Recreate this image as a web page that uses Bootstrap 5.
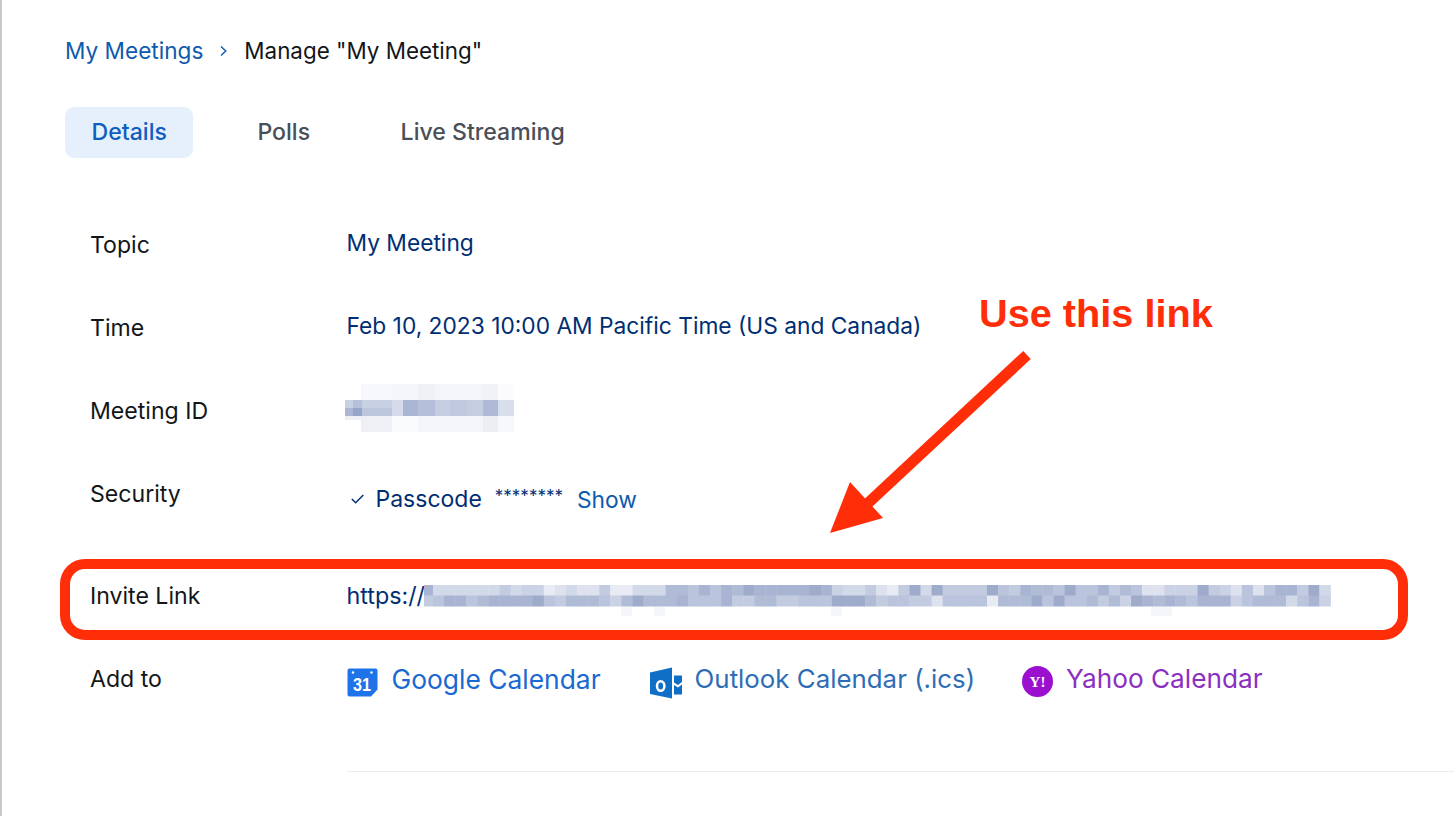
<!DOCTYPE html>
<html lang="en">
<head>
  <meta charset="UTF-8" />
  <meta name="viewport" content="width=device-width, initial-scale=1" />
  <title>Manage "My Meeting"</title>
  <link href="https://cdn.jsdelivr.net/npm/bootstrap@5.3.0/dist/css/bootstrap.min.css" rel="stylesheet" />
  <style>
    html, body { height: 100%; overflow: hidden; }
    body { font-family: Inter, "Liberation Sans", sans-serif; color: #131619; background: #fff; font-size: 22.75px; line-height: 32px; }
    .page-wrap { position: relative; height: 816px; border-left: 2px solid #c9c9c9; padding: 35px 0 0 63px; }
    .crumb-row { font-size: 22.4px; }
    .crumb-link { color: #0e5aad; text-decoration: none; font-size: 22.6px; }
    .crumb-sep { width: 9px; height: 12px; margin: 0 16px 0 16px; }
    .tab-row { margin-top: 40px; gap: 37.5px; height: 51px; }
    .tab-item { padding: 0 26.5px; line-height: 51px; border-radius: 9px; color: #4a4f57; font-size: 23.1px; font-weight: 500; text-decoration: none; }
    .tab-item.is-on { background: #e6f0fc; color: #0e5ec0; }
    .info-list { margin: 71px 0 0 25px; }
    .info-row { height: 83px; }
    .info-row.is-tall { height: 102px; }
    .info-label { width: 256.5px; flex: none; font-size: 23.1px; }
    .info-val { color: #002e73; margin-top: -2px; }
    .info-val.is-low { margin-top: 5px; }
    .info-val.is-level { margin-top: 0; }
    .check-ico { width: 13px; height: 10px; margin: 0 12px 0 4px; }
    .pass-text { font-size: 23px; }
    .stars { margin: 0 14px 0 13px; font-size: 17px; position: relative; top: -3px; }
    .show-link { color: #0e5aad; text-decoration: none; position: relative; top: 1px; }
    .meeting-blur { display: block; margin: -9px 0 0 -3px; }
    .invite-text { font-size: 23.3px; }
    .invite-blur { display: block; margin-left: -1px; }
    .cal-google-ico { margin-top: 5px; }
    .cal-outlook-ico { margin-top: 4px; }
    .cal-yahoo-ico { margin-top: 3px; }
    .cal-ico { flex: none; }
    .cal-link { font-size: 26.2px; text-decoration: none; }
    .cal-google { color: #1a68d1; margin: 0 49px 0 14px; font-size: 26.4px; }
    .cal-outlook { color: #2e6db4; margin: 0 47px 0 13px; font-size: 25.85px; }
    .cal-yahoo { color: #8a2fc0; margin-left: 13px; }
    .end-rule { height: 1px; background: #ededed; margin: 25px 0 0 256.5px; }
    .mark-box { position: absolute; left: 58px; top: 559px; width: 1348px; height: 81px; border: 10px solid #ff2d08; border-radius: 25px; }
    .mark-text { position: absolute; left: 977px; top: 290px; font-family: "Liberation Sans", Arial, sans-serif; font-weight: 700; font-size: 39.7px; line-height: 46px; color: #ff2d08; }
    .mark-arrow { position: absolute; left: -2px; top: 0; }
  </style>
</head>
<body>
  <div class="page-wrap">

    <!-- breadcrumb -->
    <div class="d-flex align-items-center crumb-row">
      <a class="crumb-link" href="#">My Meetings</a>
      <svg class="crumb-sep" viewBox="0 0 9 12"><path d="M2 1.500 6.800 6 2 10.500" fill="none" stroke="#0e5aad" stroke-width="1.400"/></svg>
      <span>Manage "My Meeting"</span>
    </div>

    <!-- tabs -->
    <div class="d-flex tab-row">
      <a class="tab-item is-on" href="#">Details</a>
      <a class="tab-item" href="#">Polls</a>
      <a class="tab-item" href="#">Live Streaming</a>
    </div>

    <!-- details -->
    <div class="info-list">
      <div class="d-flex info-row">
        <div class="info-label">Topic</div>
        <div class="info-val">My Meeting</div>
      </div>
      <div class="d-flex info-row">
        <div class="info-label">Time</div>
        <div class="info-val">Feb 10, 2023 10:00 AM Pacific Time (US and Canada)</div>
      </div>
      <div class="d-flex info-row">
        <div class="info-label">Meeting ID</div>
        <div class="info-val">
          <svg class="meeting-blur" width="172" height="48" viewBox="344 384 172 48">
            <rect x="361" y="384" width="31" height="16" fill="#f7f8fb"/>
            <rect x="392" y="384" width="26" height="16" fill="#f3f5f9"/>
            <rect x="418" y="384" width="17" height="16" fill="#eef0f5"/>
            <rect x="435" y="384" width="48" height="16" fill="#f3f5f9"/>
            <rect x="483" y="384" width="15" height="16" fill="#f0f2f7"/>
            <rect x="498" y="384" width="16" height="16" fill="#fbfbfd"/>
            <rect x="345" y="400" width="8" height="8" fill="#c8d0e3"/>
            <rect x="353" y="400" width="9" height="8" fill="#b5c0da"/>
            <rect x="362" y="400" width="30" height="8" fill="#c8d1e4"/>
            <rect x="345" y="408" width="8" height="8" fill="#aab6d4"/>
            <rect x="353" y="408" width="9" height="8" fill="#95a5cb"/>
            <rect x="362" y="408" width="30" height="8" fill="#bcc6dd"/>
            <rect x="392" y="400" width="11" height="16" fill="#d5dbea"/>
            <rect x="403" y="400" width="15" height="16" fill="#aab6d4"/>
            <rect x="418" y="400" width="17" height="16" fill="#b4bfd9"/>
            <rect x="435" y="400" width="15" height="16" fill="#c5cde1"/>
            <rect x="450" y="400" width="17" height="16" fill="#bfc8df"/>
            <rect x="467" y="400" width="16" height="16" fill="#c5cde1"/>
            <rect x="483" y="400" width="15" height="16" fill="#aeb9d5"/>
            <rect x="498" y="400" width="16" height="16" fill="#d8deeb"/>
            <rect x="345" y="416" width="17" height="4" fill="#eef0f6"/>
            <rect x="361" y="416" width="31" height="16" fill="#eef0f6"/>
            <rect x="392" y="416" width="26" height="16" fill="#f9fafc"/>
            <rect x="418" y="416" width="65" height="16" fill="#f4f5f9"/>
            <rect x="483" y="416" width="15" height="16" fill="#eceef4"/>
            <rect x="498" y="416" width="16" height="16" fill="#f7f8fb"/>
          </svg>
        </div>
      </div>
      <div class="d-flex info-row is-tall">
        <div class="info-label">Security</div>
        <div class="info-val is-low d-flex align-items-center align-self-start">
          <svg class="check-ico" viewBox="0 0 13 10"><path d="M.8 5 4.700 8.800 12.300 1" fill="none" stroke="#002e73" stroke-width="1.500"/></svg>
          <span class="pass-text">Passcode</span><span class="stars">********</span><a class="show-link" href="#">Show</a>
        </div>
      </div>
      <div class="d-flex info-row">
        <div class="info-label">Invite Link</div>
        <div class="info-val is-level d-flex align-items-start">
          <span class="invite-text">https://</span>
          <svg class="invite-blur" id="inviteBlur" width="907" height="36"></svg>
        </div>
      </div>
      <div class="d-flex info-row">
        <div class="info-label">Add to</div>
        <div class="info-val is-level d-flex align-items-start align-self-start">
          <svg class="cal-ico cal-google-ico" width="31" height="29" viewBox="0 0 31 29">
            <path d="M2.500 .5H28.500A2 2 0 0 1 30.500 2.500V21.500L24 28.500H2.500A2 2 0 0 1 .5 26.500V2.500A2 2 0 0 1 2.500 .5Z" fill="#1f73e8"/>
            <circle cx="6" cy="4.500" r="1.200" fill="#fff"/><circle cx="24.500" cy="4.500" r="1.200" fill="#fff"/>
            <text x="15" y="23" text-anchor="middle" font-family="Liberation Sans, sans-serif" font-weight="700" font-size="19" textLength="18" lengthAdjust="spacingAndGlyphs" fill="#fff">31</text>
          </svg>
          <a class="cal-link cal-google" href="#">Google Calendar</a>
          <svg class="cal-ico cal-outlook-ico" width="32" height="32" viewBox="0 0 32 32">
            <path d="M0 5.500 22 .5V31.500L0 27Z" fill="#0f6fc6"/>
            <path d="M24 8.500H32V15L28 18 24 15.500ZM24 18 28 20.500 32 17.500V27.500H24Z" fill="#0f6fc6"/>
            <ellipse cx="10.700" cy="19" rx="3.700" ry="4.800" fill="none" stroke="#fff" stroke-width="2.500"/>
          </svg>
          <a class="cal-link cal-outlook" href="#">Outlook Calendar (.ics)</a>
          <svg class="cal-ico cal-yahoo-ico" width="31" height="31" viewBox="0 0 31 31">
            <circle cx="15.500" cy="15.500" r="15.500" fill="#9b10cf"/>
            <text x="15.500" y="20.500" text-anchor="middle" font-family="Liberation Serif, serif" font-weight="700" font-size="15" fill="#fff">Y!</text>
          </svg>
          <a class="cal-link cal-yahoo" href="#">Yahoo Calendar</a>
        </div>
      </div>
      <div class="end-rule"></div>
    </div>

    <!-- annotation -->
    <div class="mark-text">Use this link</div>
    <div class="mark-box"></div>
    <svg class="mark-arrow" width="1454" height="816" viewBox="0 0 1454 816">
      <path d="M1027 355 866 505" stroke="#ff2d08" stroke-width="11" fill="none"/>
      <path d="M830 533 850 482 883 518Z" fill="#ff2d08"/>
    </svg>
  </div>

  <script src="https://cdn.jsdelivr.net/npm/bootstrap@5.3.0/dist/js/bootstrap.bundle.min.js"></script>
  <script>
    // tints for the blurred invite link, one digit per cell
    const tints = ["#ffffff", "#e8ebf3", "#dde2ee", "#d2d9e8", "#cbd2e5", "#c2cbe0", "#bac4dc", "#b0bbd6", "#a8b4d2", "#9eabcb"];
    const cellW = 11.08;
    const topRow = "8333333534412322511333" + "77686879888889843352" + "15939555596587769668" + "57622444954262688593";
    const botRow = "5688678888965777647977" + "78666855775566699975" + "66552666617779696675" + "74987876888467773684";
    // faint spill under the strip
    const spill = [[230, 11], [407, 11], [727, 21], [197, 11]];

    let out = "";
    [topRow, botRow].forEach((row, r) => {
      [...row].forEach((c, i) => {
        const x = i === 0 ? 0 : 9 + (i - 1) * cellW;
        const w = i === 0 ? 9 : cellW;
        out += `<rect x="${x}" y="${5 + r * 10.5}" width="${w + 0.4}" height="11" fill="${tints[+c]}"/>`;
      });
    });
    spill.forEach(([x, w]) => {
      out += `<rect x="${x}" y="27" width="${w}" height="9" fill="#f5f6fa"/>`;
    });
    document.getElementById("inviteBlur").innerHTML = out;
  </script>
</body>
</html>
